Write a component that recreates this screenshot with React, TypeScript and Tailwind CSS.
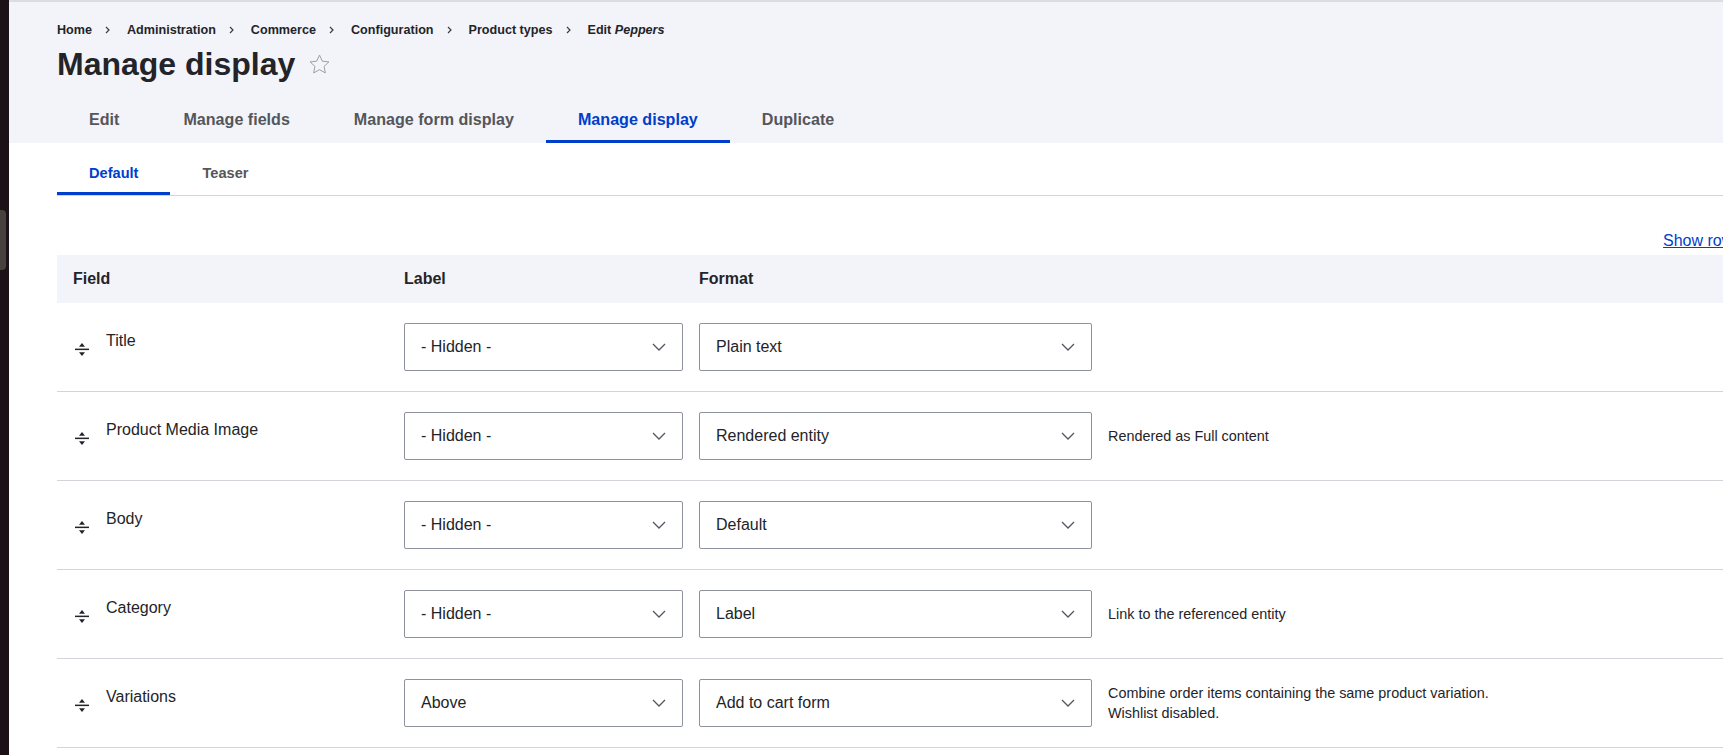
import React from "react";

interface Row {
  name: string;
  label: string;
  format: string;
  summary: string[];
}

const rows: Row[] = [
  { name: "Title", label: "- Hidden -", format: "Plain text", summary: [] },
  { name: "Product Media Image", label: "- Hidden -", format: "Rendered entity", summary: ["Rendered as Full content"] },
  { name: "Body", label: "- Hidden -", format: "Default", summary: [] },
  { name: "Category", label: "- Hidden -", format: "Label", summary: ["Link to the referenced entity"] },
  {
    name: "Variations",
    label: "Above",
    format: "Add to cart form",
    summary: ["Combine order items containing the same product variation.", "Wishlist disabled."],
  },
];

const crumbs = ["Home", "Administration", "Commerce", "Configuration", "Product types"];
const primaryTabs = ["Edit", "Manage fields", "Manage form display", "Manage display", "Duplicate"];

function Crumb() {
  return (
    <svg width="5" height="8" viewBox="0 0 5 8" className="ml-[13px] mr-[17px]">
      <path d="M1 1l3 3-3 3" fill="none" stroke="#3b3c42" strokeWidth="1.2" />
    </svg>
  );
}

function Select({ value, width }: { value: string; width: string }) {
  return (
    <div
      className={`${width} h-[48px] flex items-center justify-between pl-4 pr-4 border border-[#8e929c] rounded-[2px] bg-white text-[16px] text-[#232429]`}
    >
      <span>{value}</span>
      <svg width="14" height="8" viewBox="0 0 14 8">
        <path d="M1 1l6 6 6-6" fill="none" stroke="#545560" strokeWidth="1.3" />
      </svg>
    </div>
  );
}

function DragHandle() {
  return (
    <svg width="14" height="14" viewBox="0 0 14 14" className="mt-[13px] shrink-0">
      <path d="M7 1L4 4.8h6z" fill="#232429" />
      <rect x="0" y="6.6" width="14" height="1.5" fill="#232429" />
      <path d="M7 14L4 10.2h6z" fill="#232429" />
    </svg>
  );
}

export default function App() {
  return (
    <div className="flex w-screen h-[755px] overflow-hidden bg-white font-['Liberation_Sans',Arial,sans-serif] text-[#232429]">
      {/* Desktop strip */}
      <div className="w-[9px] shrink-0 bg-[#1b1116] pt-[210px]">
        <div className="w-[6px] h-[60px] rounded-r-[4px] bg-[#47403f]" />
      </div>

      <div className="flex-1 min-w-0 overflow-hidden">
        {/* Header */}
        <header className="bg-[#f3f4f9] border-t-2 border-[#dcdce1] pl-[48px] pt-[18px]">
          <nav className="flex items-center h-[20px] text-[12.6px] font-bold text-[#232429]">
            {crumbs.map((c) => (
              <React.Fragment key={c}>
                <span>{c}</span>
                <Crumb />
              </React.Fragment>
            ))}
            <span>
              Edit <em>Peppers</em>
            </span>
          </nav>
          <div className="flex items-center h-[40px] mt-[4px]">
            <h1 className="text-[32px] leading-[40px] font-bold text-[#232429]">Manage display</h1>
            <svg width="23" height="23" viewBox="0 0 24 24" className="ml-[13px] mt-[1px]">
              <path
                d="M12 2.2l2.95 6.3 6.85.8-5.05 4.7 1.35 6.8L12 17.4l-6.1 3.4 1.35-6.8L2.2 9.3l6.85-.8z"
                fill="none"
                stroke="#9a9ba0"
                strokeWidth="1"
                strokeLinejoin="round"
              />
            </svg>
          </div>
          <div className="flex mt-[11px] h-[48px]">
            {primaryTabs.map((t) => {
              const active = t === "Manage display";
              return (
                <div
                  key={t}
                  className={`h-[48px] px-8 flex items-center text-[16.1px] font-bold ${
                    active ? "text-[#003ecc] shadow-[inset_0_-3px_0_#003ecc]" : "text-[#55565b]"
                  }`}
                >
                  {t}
                </div>
              );
            })}
          </div>
        </header>

        {/* Content */}
        <main className="pl-[48px]">
          <div className="flex mt-[10px] border-b border-[#d3d4d9] w-[1735px]">
            <div className="h-[42px] px-8 flex items-center text-[14.6px] font-bold text-[#003ecc] shadow-[inset_0_-3px_0_#003ecc]">
              Default
            </div>
            <div className="h-[42px] px-8 flex items-center text-[14.6px] font-bold text-[#55565b]">Teaser</div>
          </div>

          <div className="w-[1735px]">
            <div className="flex justify-end mt-[35px] h-[20px] leading-[20px]">
              <a className="text-[16px] text-[#003ecc] underline">Show row weights</a>
            </div>

            <div className="mt-[4px]">
              <div className="grid grid-cols-[331px_295px_1fr] h-[48px] items-center bg-[#f3f4f9] text-[16px] font-bold">
                <div className="pl-4">Field</div>
                <div className="pl-4">Label</div>
                <div className="pl-4">Format</div>
              </div>

              {rows.map((r) => (
                <div
                  key={r.name}
                  className="grid grid-cols-[331px_295px_1fr] py-[20px] border-b border-[#d3d4d9]"
                >
                  <div className="flex items-start pl-[18px] pt-[6px]">
                    <DragHandle />
                    <span className="ml-[17px] text-[16px] leading-6">{r.name}</span>
                  </div>
                  <div className="pl-4">
                    <Select value={r.label} width="w-[279px]" />
                  </div>
                  <div className="pl-4 flex items-center gap-4">
                    <Select value={r.format} width="w-[393px]" />
                    {r.summary.length > 0 && (
                      <div className="text-[14.4px] leading-[20px] text-[#232429]">
                        {r.summary.map((s) => (
                          <div key={s}>{s}</div>
                        ))}
                      </div>
                    )}
                  </div>
                </div>
              ))}
            </div>
          </div>
        </main>
      </div>
    </div>
  );
}
